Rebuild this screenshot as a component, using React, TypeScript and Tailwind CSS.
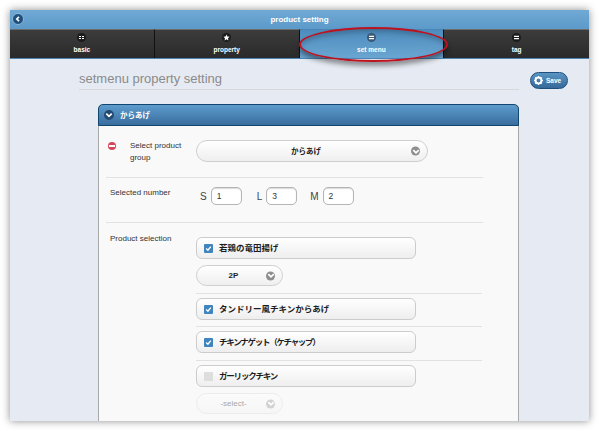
import React from "react";

const sans = { fontFamily: '"Liberation Sans", Arial, sans-serif' };
const cjk = { fontFamily: '"Noto Sans CJK JP", sans-serif' };

function Chevron({ className }: { className: string }) {
  return (
    <span className={`flex items-center justify-center rounded-full ${className}`}>
      <svg width="8" height="8" viewBox="0 0 8 8">
        <path d="M1.3 2.6 4 5.3 6.7 2.6" fill="none" stroke="#fff" strokeWidth="1.7" />
      </svg>
    </span>
  );
}

function TabIcon({ kind, active }: { kind: string; active?: boolean }) {
  return (
    <span className={`w-[9px] h-[9px] rounded-full flex items-center justify-center ${active ? "bg-[#3c5a78]" : "bg-[#1c1c1c]"}`}>
      <svg width="7" height="7" viewBox="0 0 7 7">
        {kind === "grid" && <path d="M1 2h2v1H1zM4 2h2v1H4zM1 4h2v1H1zM4 4h2v1H4z" fill="#fff" />}
        {kind === "star" && <path d="M3.5.6 4.4 2.6 6.5 2.8 5 4.2 5.4 6.4 3.5 5.3 1.6 6.4 2 4.2.5 2.8 2.6 2.6z" fill="#fff" />}
        {kind === "bars" && <path d="M1 1.8h5v1.3H1zM1 3.9h5v1.3H1z" fill="#fff" />}
      </svg>
    </span>
  );
}

function Tab({ label, kind, active, last }: { label: string; kind: string; active?: boolean; last?: boolean }) {
  return (
    <div
      className={`flex flex-col items-center pt-[3px] gap-[3px] border-t border-[#6c6c6c] ${last ? "" : "border-r border-r-[#111]"} ${
        active
          ? "bg-gradient-to-b from-[#4d8cbd] to-[#6ba6d2] border-t-[#4a86b5]"
          : "bg-gradient-to-b from-[#3c3c3c] to-[#2a2a2a]"
      }`}
    >
      <TabIcon kind={kind} active={active} />
      <span className="text-[6.5px] leading-[10px] font-bold text-white">{label}</span>
    </div>
  );
}

function SelectBox({ label, className, disabled }: { label: string; className: string; disabled?: boolean }) {
  return (
    <div
      className={`relative flex items-center justify-center rounded-full border pr-[12px] bg-gradient-to-b ${
        disabled ? "border-[#ececec] from-[#fbfbfb] to-[#f6f6f6] text-[#a8a8a8]" : "border-[#cfcfcf] from-white to-[#efefef] text-[#222]"
      } ${className}`}
    >
      {label}
      <Chevron
        className={`absolute right-[7px] top-1/2 -translate-y-1/2 w-[9px] h-[9px] ${disabled ? "bg-[#d2d2d2]" : "bg-[#8e8e8e]"}`}
      />
    </div>
  );
}

function CheckRow({ label, checked, tracking }: { label: string; checked: boolean; tracking?: string }) {
  return (
    <div className="flex items-center w-[220px] h-[22px] rounded-[6px] border border-[#cccccc] bg-gradient-to-b from-white to-[#eeeeee] pl-[7px] gap-[6px]">
      <span className={`w-[9px] h-[9px] rounded-[1px] flex items-center justify-center ${checked ? "bg-[#3f84bd]" : "bg-[#dddddd]"}`}>
        {checked && (
          <svg width="7" height="7" viewBox="0 0 7 7">
            <path d="M1.2 3.6 2.9 5.2 5.8 1.6" fill="none" stroke="#fff" strokeWidth="1.4" />
          </svg>
        )}
      </span>
      <span className={`text-[8.5px] font-bold text-[#1c1c1c] whitespace-nowrap pb-[2px] ${tracking ?? ""}`} style={cjk}>
        {label}
      </span>
    </div>
  );
}

function NumberField({ label, value, gapClass }: { label: string; value: string; gapClass: string }) {
  return (
    <div className={`flex items-center gap-[4px] ${gapClass}`}>
      <span className="text-[10px] text-[#444]">{label}</span>
      <span className="w-[31px] h-[18px] rounded-[5px] border border-[#b5b5b5] bg-white pl-[5px] text-[8.5px] leading-[16px] text-[#333] shadow-[inset_0_1px_1px_rgba(0,0,0,0.15)]">
        {value}
      </span>
    </div>
  );
}

export default function App() {
  return (
    <div className="w-[599px] h-[431px] bg-white p-[10px] overflow-hidden" style={sans}>
      <div className="relative w-[579px] h-[411px] bg-[#e6ebf3] shadow-[0_0_8px_rgba(0,0,0,0.45)] overflow-hidden">
        {/* Header */}
        <div className="relative h-[19px] bg-gradient-to-b from-[#70a9d4] to-[#5c9aca] flex items-center justify-center">
          <span className="text-[8px] font-bold text-white">product setting</span>
          <span className="absolute left-[2px] top-[3px] w-[12px] h-[12px] rounded-full bg-[#1f4f7c] border border-[#8db8d8] flex items-center justify-center">
            <svg width="8" height="8" viewBox="0 0 8 8">
              <path d="M5 1.8 2.8 4 5 6.2" fill="none" stroke="#fff" strokeWidth="1.7" />
            </svg>
          </span>
        </div>

        {/* Tabs */}
        <div className="grid grid-cols-4 h-[30px] border-b border-[#4d86b5]">
          <Tab label="basic" kind="grid" />
          <Tab label="property" kind="star" />
          <Tab label="set menu" kind="bars" active />
          <Tab label="tag" kind="bars" last />
        </div>

        {/* Callout drawn over the active tab */}
        <span className="absolute left-[289px] top-[17px] w-[149px] h-[35px] rounded-[50%] border-2 border-[#bb1420] shadow-[0_4px_5px_rgba(0,0,0,0.4),inset_0_3px_5px_rgba(0,0,0,0.2)]" />

        {/* Title row */}
        <div className="flex items-start pl-[69px] pr-[21px] pt-[14px]">
          <div className="w-[440px] h-[17px] border-b border-[#d8d8d8]">
            <h1 className="text-[13px] leading-[11px] text-[#8a8a8a] font-normal">setmenu property setting</h1>
          </div>
          <div className="ml-[11px] -mt-[1px] flex items-center gap-[3px] w-[38px] h-[17px] rounded-full border border-[#1f4f7c] bg-gradient-to-b from-[#5a95c4] to-[#35699a] pl-[3px] text-[6.5px] font-bold text-white">
            <svg width="9" height="9" viewBox="0 0 9 9">
              <circle cx="4.5" cy="4.5" r="3" fill="none" stroke="#fff" strokeWidth="2" />
              <path d="M4.5 0v2M4.5 7v2M0 4.5h2M7 4.5h2M1.3 1.3l1.4 1.4M6.3 6.3l1.4 1.4M1.3 7.7l1.4-1.4M6.3 2.7l1.4-1.4" stroke="#fff" strokeWidth="1" />
            </svg>
            Save
          </div>
        </div>

        {/* Collapsible panel */}
        <div className="ml-[88px] mt-[14px] w-[421px] h-[320px] rounded-t-[5px] border-x border-[#a8a8a8] bg-[#f9f9f9]">
          <div className="-mx-[1px] h-[22px] rounded-t-[5px] border border-[#13466f] bg-gradient-to-b from-[#5d9cce] to-[#3a6d9e] flex items-center pl-[5px] gap-[6px]">
            <Chevron className="w-[10px] h-[10px] bg-[#234a70]" />
            <span className="text-[7.5px] font-bold text-white" style={cjk}>
              からあげ
            </span>
          </div>

          <div className="pl-[7px] w-[384px]">
            {/* Product group */}
            <div className="flex items-start h-[52px] pt-[14px] border-b border-[#e2e2e2]">
              <span className="mt-[2px] ml-[2px] w-[8px] h-[8px] rounded-full bg-[#d4475a] flex items-center justify-center shrink-0">
                <span className="w-[6px] h-[2px] bg-white" />
              </span>
              <span className="ml-[14px] w-[66px] text-[8px] leading-[11.5px] text-[#333]">Select product group</span>
              <SelectBox label="からあげ" className="w-[232px] h-[22px] text-[7.5px] font-bold font-['Noto_Sans_CJK_JP',sans-serif]" />
            </div>

            {/* Selected number */}
            <div className="flex items-start h-[45px] pt-[9px] border-b border-[#e2e2e2]">
              <span className="ml-[4px] w-[90px] text-[8px] leading-[11px] text-[#333]">Selected number</span>
              <div className="flex items-center">
                <NumberField label="S" value="1" gapClass="" />
                <NumberField label="L" value="3" gapClass="ml-[15px]" />
                <NumberField label="M" value="2" gapClass="ml-[13px]" />
              </div>
            </div>

            {/* Product selection */}
            <div className="flex items-start pt-[10px]">
              <span className="ml-[4px] w-[86px] text-[8px] leading-[11px] text-[#333] shrink-0">Product selection</span>
              <div className="w-[286px] mt-[4px]">
                <div className="h-[57px] border-b border-[#e2e2e2]">
                  <CheckRow label="若鶏の竜田揚げ" checked />
                  <SelectBox label="2P" className="mt-[6px] w-[87px] h-[21px] text-[8px] font-bold" />
                </div>
                <div className="h-[33px] pt-[4px] border-b border-[#e2e2e2]">
                  <CheckRow label="タンドリー風チキンからあげ" checked />
                </div>
                <div className="h-[34px] pt-[4px] border-b border-[#e2e2e2]">
                  <CheckRow label="チキンナゲット（ケチャップ）" checked tracking="tracking-[-1.3px]" />
                </div>
                <div className="pt-[4px]">
                  <CheckRow label="ガーリックチキン" checked={false} tracking="tracking-[-1.2px]" />
                  <SelectBox label="-select-" className="mt-[6px] w-[87px] h-[21px] text-[8px]" disabled />
                </div>
              </div>
            </div>
          </div>
        </div>
      </div>
    </div>
  );
}
